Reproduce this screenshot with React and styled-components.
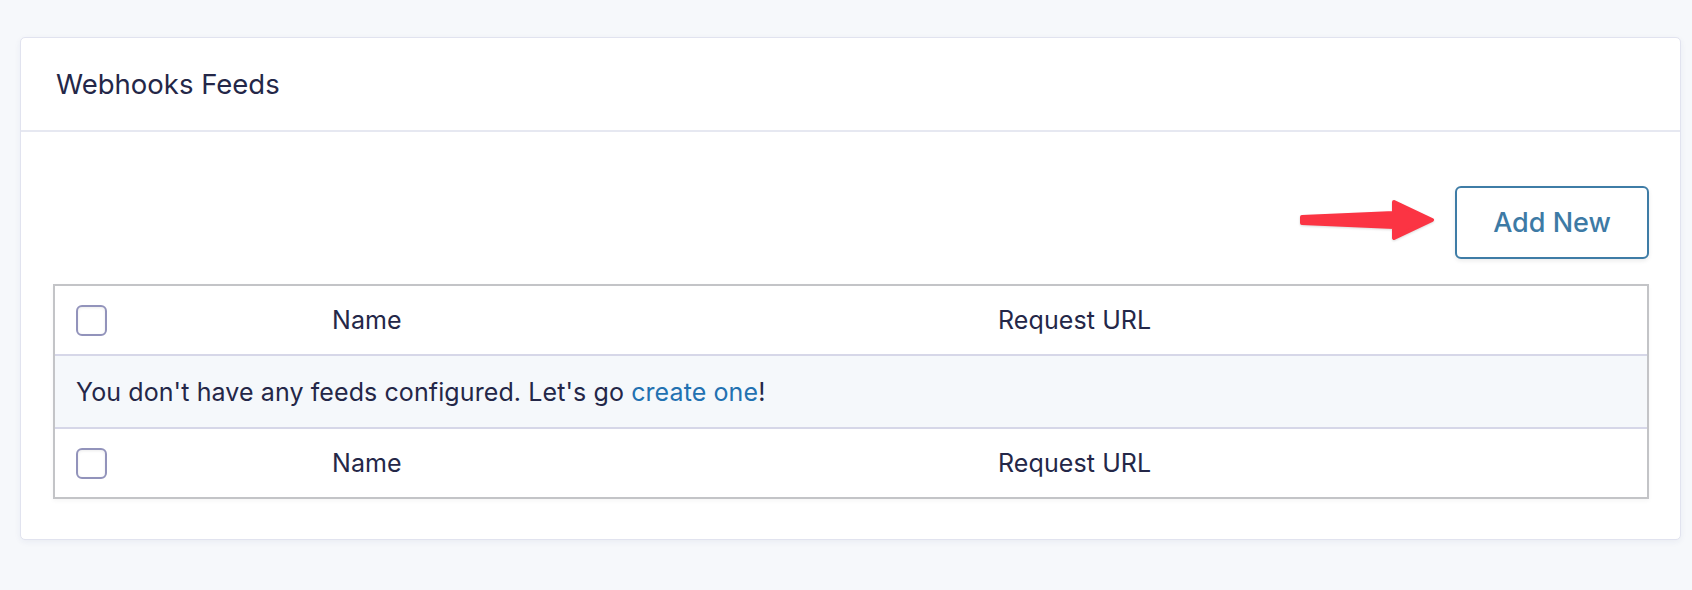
import styled, { createGlobalStyle } from 'styled-components'

const GlobalStyle = createGlobalStyle`
  html, body {
    margin: 0;
    background: #f6f8fb;
    font-family: Inter, "Noto Sans", sans-serif;
    color: #242748;
  }
`

const Page = styled.div`
  padding: 37px 11px 40px 20px;
`

const Card = styled.section`
  background: #fff;
  border: 1px solid #e1e3ef;
  border-radius: 5px;
  box-shadow: 0 2px 6px rgba(40, 50, 120, 0.06);
`

const CardHeader = styled.header`
  height: 92px;
  display: flex;
  align-items: center;
  padding-left: 35px;
  border-bottom: 2px solid #e6e8f1;
`

const Title = styled.h2`
  margin: 0;
  font-size: 27.5px;
  font-weight: 400;
  color: #242748;
`

const CardBody = styled.div`
  padding: 54px 31px 40px 32px;
`

const Toolbar = styled.div`
  display: flex;
  justify-content: flex-end;
  margin-bottom: 25px;
  position: relative;
`

const Arrow = styled.svg`
  position: absolute;
  right: 205px;
  top: 10px;
  filter: drop-shadow(0 1px 1px rgba(0, 0, 0, 0.15));
`

const Button = styled.button`
  height: 73px;
  width: 194px;
  background: #fff;
  border: 2px solid #3e7ca6;
  border-radius: 6px;
  color: #3d7aa5;
  font-family: Inter, "Noto Sans", sans-serif;
  font-size: 27px;
  font-weight: 500;
  cursor: pointer;
  box-shadow: 0 2px 4px rgba(0, 0, 0, 0.08);
`

const Table = styled.div`
  border: 2px solid #c3c4c7;
  box-shadow: 0 2px 4px rgba(0, 0, 0, 0.04);
`

const Row = styled.div`
  display: grid;
  grid-template-columns: 277px 666px 1fr;
  align-items: center;
  height: ${(p) => p.$h}px;
  background: ${(p) => (p.$muted ? '#f5f8fb' : '#fff')};
  border-bottom: ${(p) => (p.$last ? 'none' : '2px solid #d6d7e8')};
  font-size: 25px;
  letter-spacing: 0.1px;
`

const CheckCell = styled.div`
  padding-left: 21px;
  display: flex;
  align-items: center;
`

const Checkbox = styled.span`
  display: block;
  width: 27px;
  height: 27px;
  border: 2px solid #9293bb;
  border-radius: 6px;
  background: #fff;
  box-shadow: inset 0 1px 3px rgba(0, 0, 0, 0.08);
`

const Cell = styled.div`
  color: #242748;
`

const Empty = styled.div`
  grid-column: 1 / -1;
  padding-left: 21px;
`

const Link = styled.a`
  color: #2271b1;
  text-decoration: none;
`

function HeadRow({ last }) {
  return (
    <Row $h={68} $last={last}>
      <CheckCell>
        <Checkbox />
      </CheckCell>
      <Cell>Name</Cell>
      <Cell>Request URL</Cell>
    </Row>
  )
}

export default function App() {
  return (
    <>
      <GlobalStyle />
      <Page>
        <Card>
          <CardHeader>
            <Title>Webhooks Feeds</Title>
          </CardHeader>
          <CardBody>
            <Toolbar>
              <Arrow width="150" height="50" viewBox="0 0 150 50">
                <polygon
                  points="8,21 100,17 100,6 138,24 100,42 100,31 8,27"
                  fill="#fb3443"
                  stroke="#fb3443"
                  strokeWidth="4"
                  strokeLinejoin="round"
                />
              </Arrow>
              <Button>Add New</Button>
            </Toolbar>
            <Table>
              <HeadRow />
              <Row $h={71} $muted>
                <Empty>
                  You don't have any feeds configured. Let's go{' '}
                  <Link href="#">create one</Link>!
                </Empty>
              </Row>
              <HeadRow last />
            </Table>
          </CardBody>
        </Card>
      </Page>
    </>
  )
}
